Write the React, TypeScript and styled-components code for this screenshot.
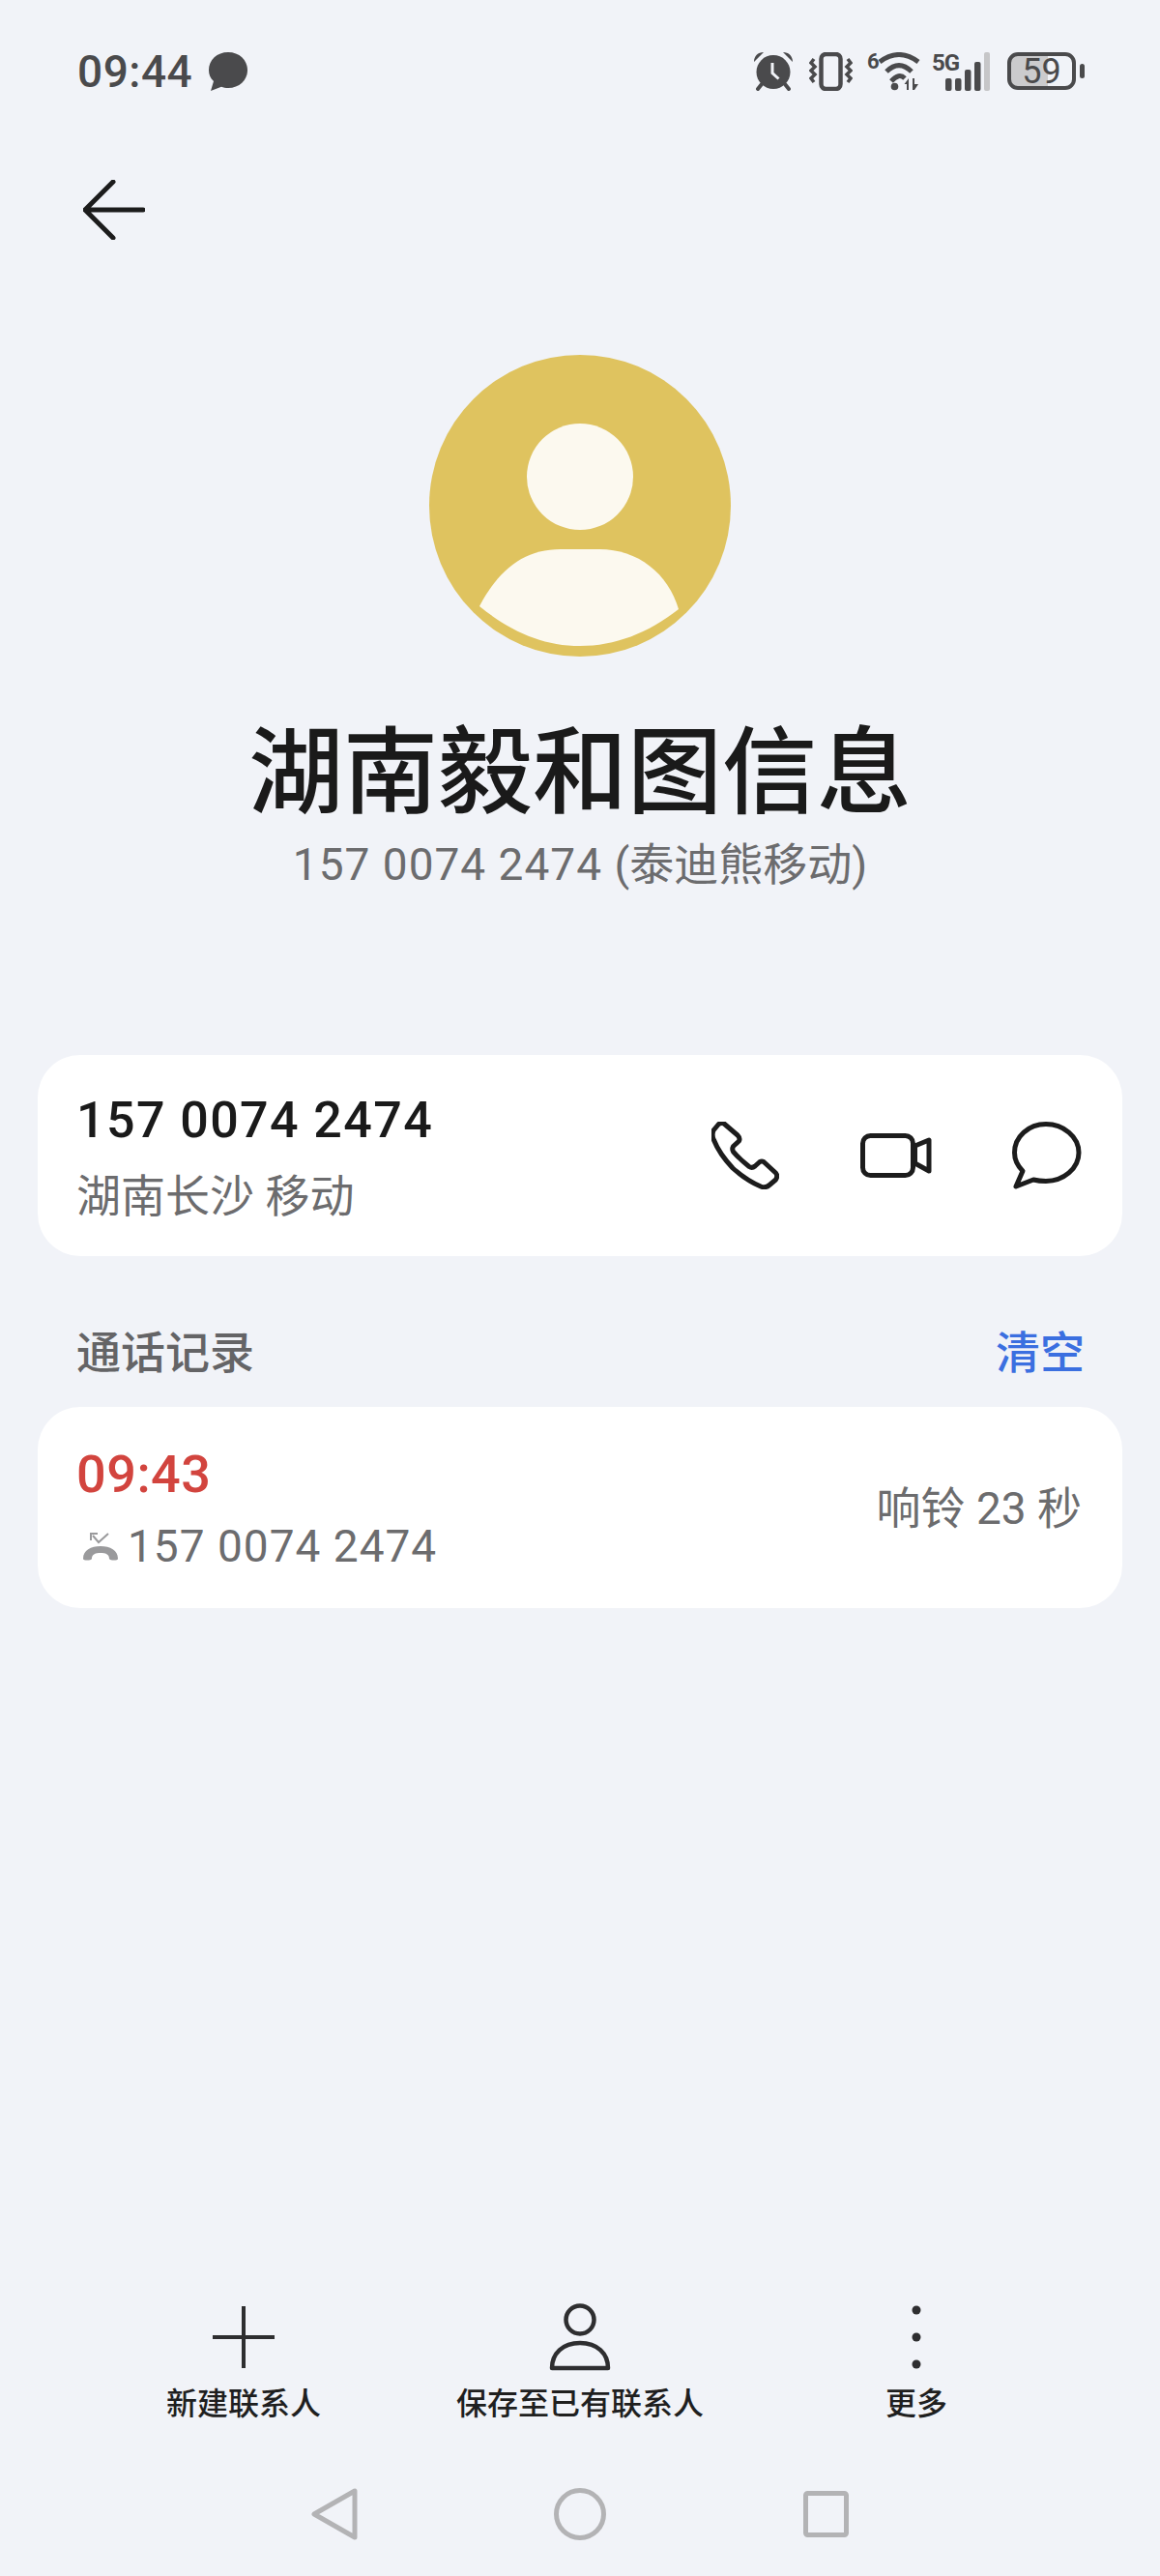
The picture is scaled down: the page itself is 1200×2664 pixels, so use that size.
import React from 'react';
import styled, { createGlobalStyle } from 'styled-components';

const FONT = `Roboto, "Noto Sans CJK SC", sans-serif`;

const Global = createGlobalStyle`
  html, body { margin: 0; padding: 0; background: #f1f3f8; }
  * { box-sizing: border-box; }
`;

const Page = styled.div`
  width: 1200px;
  height: 2664px;
  background: #f1f3f8;
  font-family: ${FONT};
  display: flex;
  flex-direction: column;
  overflow: hidden;
`;

const StatusBar = styled.div`
  height: 147px;
  padding: 54px 78px 0 80px;
  display: flex;
  justify-content: space-between;
  align-items: flex-start;
  color: #4a4a4c;
`;
const StatusLeft = styled.div`
  display: flex;
  align-items: center;
  gap: 16px;
  height: 40px;
`;
const Clock = styled.span`
  font-size: 46px;
  font-weight: 500;
  line-height: 40px;
  letter-spacing: 0.5px;
`;
const StatusIcons = styled.div`
  display: flex;
  align-items: flex-start;
`;
const StatusSlot = styled.div<{ $gap: number; $w: number }>`
  position: relative;
  width: ${p => p.$w}px;
  height: 40px;
  margin-left: ${p => p.$gap}px;
  svg { display: block; }
`;
const TinyMark = styled.span<{ $left: number; $size: number }>`
  position: absolute;
  left: ${p => p.$left}px;
  top: -1px;
  font-size: ${p => p.$size}px;
  line-height: ${p => p.$size}px;
  font-weight: 700;
  letter-spacing: -1px;
  color: #4a4a4c;
`;
const Battery = styled.div`
  position: relative;
  width: 71px;
  height: 39px;
  margin-left: 18px;
  margin-right: 9px;
  border: 4px solid #4a4a4c;
  border-radius: 11px;
  background: linear-gradient(90deg, #cbcbcd 0 60%, transparent 60%);
  display: flex;
  align-items: center;
  justify-content: center;
  font-size: 36px;
  font-weight: 400;
  color: #4a4a4c;
  &::after {
    content: '';
    position: absolute;
    right: -13px;
    top: 8px;
    width: 5px;
    height: 15px;
    border-radius: 3px;
    background: #4a4a4c;
  }
`;

const Header = styled.div`
  height: 220px;
  padding-left: 86px;
  svg { display: block; margin-top: 39px; }
`;

const Profile = styled.div`
  display: flex;
  flex-direction: column;
  align-items: center;
`;
const Name = styled.h1`
  margin: 62px 0 0;
  font-size: 98px;
  line-height: 118px;
  font-weight: 500;
  color: #1a1a1a;
  white-space: nowrap;
`;
const NumberLine = styled.div`
  margin-top: 7px;
  font-size: 46px;
  line-height: 56px;
  letter-spacing: 1px;
  color: #6c6c6e;
  white-space: nowrap;
`;
const Carrier = styled.span`
  letter-spacing: 0;
`;

const Card = styled.section`
  margin: 0 39px;
  height: 208px;
  background: #ffffff;
  border-radius: 44px;
  padding: 0 42px 0 40px;
  display: flex;
  align-items: center;
  justify-content: space-between;
`;
const ContactCard = styled(Card)`
  margin-top: 169px;
`;
const Stack = styled.div`
  display: flex;
  flex-direction: column;
`;
const MainNumber = styled.div`
  font-size: 52px;
  line-height: 68px;
  font-weight: 500;
  letter-spacing: 1.4px;
  color: #1a1a1a;
`;
const Location = styled.div`
  margin-top: 16px;
  font-size: 46px;
  line-height: 56px;
  color: #6c6c6e;
`;
const Actions = styled.div`
  display: flex;
  align-items: center;
  svg { display: block; }
`;
const ActionIcon = styled.div<{ $gap: number }>`
  margin-left: ${p => p.$gap}px;
  color: #1c1c1c;
`;

const SectionHead = styled.div`
  margin: 72px 78px 28px 79px;
  height: 56px;
  display: flex;
  justify-content: space-between;
  align-items: center;
  font-size: 46px;
  line-height: 56px;
  font-weight: 500;
`;
const SectionTitle = styled.span`
  color: #646466;
`;
const ClearLink = styled.span`
  color: #3b6fe0;
`;
const CallTime = styled.div`
  font-size: 54px;
  line-height: 66px;
  font-weight: 500;
  letter-spacing: 0.5px;
  color: #d2443e;
`;
const CallNumber = styled.div`
  margin-top: 13px;
  display: flex;
  align-items: center;
  gap: 10px;
  font-size: 46px;
  line-height: 56px;
  letter-spacing: 1px;
  color: #6c6c6e;
  svg { margin-left: 7px; display: block; }
`;
const CallDuration = styled.div`
  margin-bottom: 6px;
  font-size: 46px;
  color: #6c6c6e;
  white-space: nowrap;
`;

const Spacer = styled.div`
  flex: 1;
`;

const ActionBar = styled.div`
  display: grid;
  grid-template-columns: repeat(3, 348px);
  justify-content: center;
  height: 146px;
`;
const BarItem = styled.div`
  display: flex;
  flex-direction: column;
  align-items: center;
  svg { display: block; }
`;
const BarLabel = styled.div`
  margin-top: 11px;
  font-size: 32px;
  line-height: 42px;
  font-weight: 500;
  color: #1f1f1f;
  white-space: nowrap;
`;

const NavBar = styled.div`
  height: 136px;
  display: flex;
  justify-content: center;
  align-items: center;
  gap: 203px;
  padding: 45px 0 37px;
  svg { display: block; }
`;

export default function App() {
  return (
    <Page>
      <Global />
      <StatusBar>
        <StatusLeft>
          <Clock>09:44</Clock>
          <svg width="42" height="40" viewBox="0 0 42 40">
            <path d="M21 0C32.500 0 41 8 41 18.500S32.500 37 21 37c-2.500 0-5-.4-7-1.200L3 40l3-10C2.500 27 1 23 1 18.500 1 8 9.500 0 21 0Z" fill="#4a4a4c" />
          </svg>
        </StatusLeft>
        <StatusIcons>
          <StatusSlot $gap={0} $w={40}>
            <svg width="40" height="40" viewBox="0 0 40 40" fill="#4a4a4c">
              <circle cx="20" cy="20.500" r="17.500" />
              <path d="M0 10C0 4 4 0 10 0ZM40 10C40 4 36 0 30 0Z" />
              <path d="M8 33l-4 5M32 33l4 5" stroke="#4a4a4c" strokeWidth="4" strokeLinecap="round" />
              <path d="M19 11v10.500l6.500 6" fill="none" stroke="#f1f3f8" strokeWidth="3" />
            </svg>
          </StatusSlot>
          <StatusSlot $gap={17} $w={45}>
            <svg width="45" height="40" viewBox="0 0 45 40" fill="none" stroke="#4a4a4c">
              <rect x="12.500" y="2" width="20" height="36" rx="5" strokeWidth="4.500" />
              <path d="M5 7l-3 4 4 4-4 4 4 4-4 4 3 4M40 7l3 4-4 4 4 4-4 4 4 4-3 4" strokeWidth="3.500" />
            </svg>
          </StatusSlot>
          <StatusSlot $gap={14} $w={56}>
            <TinyMark $left={1} $size={22}>6</TinyMark>
            <svg width="56" height="40" viewBox="0 0 56 40" fill="none">
              <path d="M14 10Q34-5 54 10M21 20Q34 7 47 20M26 30Q34 21 40 27" stroke="#4a4a4c" strokeWidth="5" />
              <circle cx="29.500" cy="35.500" r="3.800" fill="#4a4a4c" />
              <path d="M39.500 33 44 27V39H42V33ZM48 27H50V33H54L50 39H48Z" fill="#4a4a4c" />
            </svg>
          </StatusSlot>
          <StatusSlot $gap={12} $w={60}>
            <TinyMark $left={0} $size={24}>5G</TinyMark>
            <svg width="60" height="40" viewBox="0 0 60 40">
              <g fill="#4a4a4c">
                <rect x="14" y="27" width="6.500" height="13" rx="2" />
                <rect x="24" y="27" width="6.500" height="13" rx="2" />
                <rect x="34" y="18" width="6.500" height="22" rx="2" />
                <rect x="44" y="10" width="6.500" height="30" rx="2" />
              </g>
              <rect x="54" y="0" width="6" height="40" rx="2" fill="#c6c6c8" />
            </svg>
          </StatusSlot>
          <Battery>59</Battery>
        </StatusIcons>
      </StatusBar>

      <Header>
        <svg width="64" height="62" viewBox="0 0 64 62" fill="none" stroke="#1c1c1c" strokeWidth="5" strokeLinecap="round" strokeLinejoin="round">
          <path d="M31 2 2 31l29 29M2 31h60" />
        </svg>
      </Header>

      <Profile>
        <svg width="312" height="312" viewBox="0 0 312 312">
          <circle cx="156" cy="156" r="156" fill="#dfc35f" />
          <circle cx="156" cy="126" r="55" fill="#fcf9ef" />
          <path d="M52 260C72 222 98 201 136 201H176C216 201 247 226 258 263C226 288 192 301 156 301C118 301 84 286 52 260Z" fill="#fcf9ef" />
        </svg>
        <Name>湖南毅和图信息</Name>
        <NumberLine>157 0074 2474 <Carrier>(泰迪熊移动)</Carrier></NumberLine>
      </Profile>

      <ContactCard>
        <Stack>
          <MainNumber>157 0074 2474</MainNumber>
          <Location>湖南长沙 移动</Location>
        </Stack>
        <Actions>
          <ActionIcon $gap={0}>
            <svg width="70" height="70" viewBox="0 0 70 70" fill="none" stroke="currentColor" strokeWidth="5" strokeLinejoin="round">
              <path d="M7.500 2.500Q10 .8 13 2L27 14Q30 17 28.500 20L22.500 25.500Q21 28 22.500 31Q30 39.500 39 46.500Q42 48.500 45 46L50 41.500Q52 40.500 54 41.500L66.500 53Q69 56 66.500 60L60 65.500Q56 69 51 67Q36 60.500 22 48Q8 33 2.500 19Q0 14 2 9Z" />
            </svg>
          </ActionIcon>
          <ActionIcon $gap={84}>
            <svg width="74" height="46" viewBox="0 0 74 46" fill="none" stroke="currentColor" strokeWidth="5" strokeLinejoin="round">
              <rect x="2.500" y="2.500" width="52" height="41" rx="8" />
              <path d="M56.500 13 71 7V39L56.500 31Z" />
            </svg>
          </ActionIcon>
          <ActionIcon $gap={83}>
            <svg width="72" height="70" viewBox="0 0 72 70" fill="none" stroke="currentColor" strokeWidth="5" strokeLinejoin="round">
              <path d="M22 60C26 61 30 61.500 35 61.500C53 61.500 69 48.500 69 32C69 15.500 53 2.500 35 2.500C17 2.500 2.500 15.500 2.500 32C2.500 39 6 46 11 51L4 67Z" />
            </svg>
          </ActionIcon>
        </Actions>
      </ContactCard>

      <SectionHead>
        <SectionTitle>通话记录</SectionTitle>
        <ClearLink>清空</ClearLink>
      </SectionHead>

      <Card>
        <Stack>
          <CallTime>09:43</CallTime>
          <CallNumber>
            <svg width="36" height="30" viewBox="0 0 36 30" fill="none">
              <path d="M0 28C0 19 8 15 18 15S36 19 36 28C36 30 28 30 27 28C27 23 23 22 18 22S9 23 9 28C8 30 0 30 0 28Z" fill="#9a9a9c" />
              <path d="M26 2 16 11 10 4M8 9V2H15" stroke="#9a9a9c" strokeWidth="2" />
            </svg>
            157 0074 2474
          </CallNumber>
        </Stack>
        <CallDuration>响铃 23 秒</CallDuration>
      </Card>

      <Spacer />

      <ActionBar>
        <BarItem>
          <svg width="64" height="72" viewBox="0 0 64 72" fill="none" stroke="#2e2e30">
            <path d="M32 3V67M0 35H64" strokeWidth="4" />
          </svg>
          <BarLabel>新建联系人</BarLabel>
        </BarItem>
        <BarItem>
          <svg width="64" height="72" viewBox="0 0 64 72" fill="none" stroke="#2e2e30" strokeWidth="4.500" strokeLinejoin="round">
            <circle cx="32" cy="17" r="14.500" />
            <path d="M3 67C3 52 14 41 32 41S61 52 61 67Z" />
          </svg>
          <BarLabel>保存至已有联系人</BarLabel>
        </BarItem>
        <BarItem>
          <svg width="64" height="72" viewBox="0 0 64 72" fill="#2e2e30">
            <circle cx="32" cy="7" r="4.500" />
            <circle cx="32" cy="35" r="4.500" />
            <circle cx="32" cy="63" r="4.500" />
          </svg>
          <BarLabel>更多</BarLabel>
        </BarItem>
      </ActionBar>

      <NavBar>
        <svg width="48" height="54" viewBox="0 0 48 54" fill="none" stroke="#b3b3b5" strokeWidth="5" strokeLinejoin="round">
          <path d="M45 3V51L3 27Z" />
        </svg>
        <svg width="54" height="54" viewBox="0 0 54 54" fill="none" stroke="#b3b3b5" strokeWidth="5">
          <circle cx="27" cy="27" r="24.500" />
        </svg>
        <svg width="48" height="48" viewBox="0 0 48 48" fill="none" stroke="#b3b3b5" strokeWidth="5" strokeLinejoin="round">
          <rect x="3.500" y="2.500" width="42" height="43" rx="2" />
        </svg>
      </NavBar>
    </Page>
  );
}
